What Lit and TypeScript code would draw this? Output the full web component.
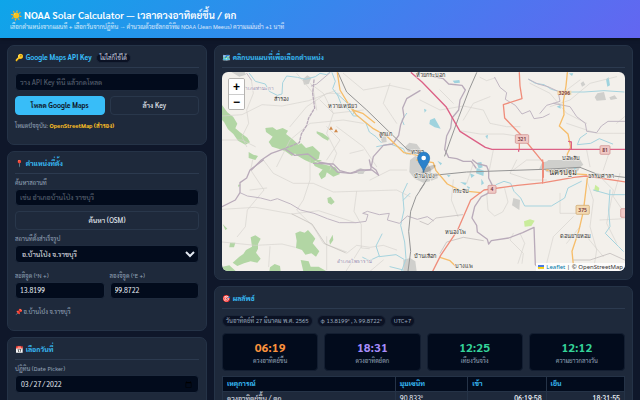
import { LitElement, html, svg, css } from "lit";
import { customElement, state } from "lit/decorators.js";

const stats = [
  { time: "06:19", label: "ดวงอาทิตย์ขึ้น", tone: "rise" },
  { time: "18:31", label: "ดวงอาทิตย์ตก", tone: "set" },
  { time: "12:25", label: "เที่ยงวันจริง", tone: "noon" },
  { time: "12:12", label: "ความยาวกลางวัน", tone: "noon" },
];

const rows = [
  { event: "ดวงอาทิตย์ขึ้น / ตก", zenith: "90.833°", am: "06:19:58", pm: "18:31:55" },
];

@customElement("solar-map")
export class SolarMap extends LitElement {
  static styles = css`
    :host {
      display: block;
      position: relative;
      height: 199px;
      border-radius: 6px;
      overflow: hidden;
      background: #f3f0eb;
      font-family: "Noto Sans", "Liberation Sans", sans-serif;
    }
    .canvas { display: block; width: 100%; height: 100%; }
    .canvas path { fill: none; stroke-linejoin: round; stroke-linecap: round; }
    .canvas .wood path { fill: #b2d6a4; }
    .canvas .town path { fill: #cfcfcc; }
    .canvas .lime path { fill: #c9ec9b; }
    .canvas .pond path { fill: #9fd3de; }
    .minor path { stroke: #d6d3cf; stroke-width: 2; }
    .river path { stroke: #a5d3de; stroke-width: 3; }
    .bound path { stroke: #b9abba; stroke-width: 4; }
    .thin path { stroke: #c0b6c2; stroke-width: 3; }
    .rail path { stroke: #959595; stroke-width: 3; }
    .amber path { stroke: #f6bd6a; stroke-width: 4; }
    .trunk path { stroke: #ef8d7b; stroke-width: 4; }
    .motor path { stroke: #dc6186; stroke-width: 4; }
    text { font-size: 17px; text-anchor: middle; fill: #333; stroke: #f6f3ee; stroke-width: 3; paint-order: stroke; }
    text.city { font-size: 22px; }
    text.area { fill: #9186ad; font-size: 14px; }
    text.ref { font-size: 15px; fill: #70343c; stroke: none; font-weight: 600; }
    .zoom {
      position: absolute;
      top: 6px;
      left: 6px;
      display: flex;
      flex-direction: column;
      border: 1px solid #b5b3b0;
      border-radius: 2px;
      overflow: hidden;
    }
    .zoom button {
      width: 15px;
      height: 15px;
      padding: 0;
      border: 0;
      background: #fff;
      color: #000;
      font: bold 12px/14px "Liberation Sans", sans-serif;
    }
    .zoom button + button { border-top: 1px solid #ccc; }
    .credit {
      position: absolute;
      right: 0;
      bottom: 0;
      display: flex;
      align-items: center;
      gap: 2px;
      padding: 0 2px;
      background: rgba(255, 255, 255, 0.8);
      color: #333;
      font-size: 6px;
      line-height: 8px;
    }
    .credit a { color: #0078a8; text-decoration: none; }
    .flag { width: 6px; height: 4px; }
  `;

  render() {
    return html`
      <svg class="canvas" viewBox="666 216 1209 597" preserveAspectRatio="xMidYMid slice" role="img" aria-label="แผนที่">
        ${this.northWest()} ${this.northEast()} ${this.southWest()} ${this.southEast()} ${this.names()}
        ${this.pin()}
      </svg>
      <div class="zoom">
        <button aria-label="Zoom in">+</button>
        <button aria-label="Zoom out">−</button>
      </div>
      <div class="credit">
        <svg class="flag" viewBox="0 0 12 8" aria-hidden="true">
          <path fill="#4C7BE1" d="M0 0h12v4H0z" /><path fill="#FFD500" d="M0 4h12v3H0z" /><path fill="#E0BC00" d="M0 7h12v1H0z" />
        </svg>
        <span><a href="#">Leaflet</a> | © OpenStreetMap</span>
      </div>
    `;
  }

  private northWest() {
    return svg`<g transform="translate(630 120)">
      <g class="wood">
        <path d="M36 195l16 22 18 14 12 20-6 14 14 12 22 16 8 14-14 7-22-12-14-20-16-14-12-22-6-6z"/>
        <path d="M166 264l22-2 12 8 18-6 16 8-6 10 20 16 16 14-2 22-16 14-20-14-16-6-24-8-10-14 12-16-20-14z"/>
        <path d="M256 318l18-8 14 14 20-6 22 20-4 18-20 14-22-10-24-14-12-14z"/>
        <path d="M320 274l18 6 20 14-4 8-16-8-18-14zM116 336l14 8 14 4-8 12-20-6z"/>
        <path d="M306 362l30 10 40 10 14 20-20 8-30-20-26-12z"/>
      </g>
      <g class="town">
        <path d="M278 118l14-12 12 8-8 18-14 2zM584 322l14-14 22 4 12 16-10 14-28-6zM512 292l16-6 2 20-14 2zM64 96h40l4 8-20 6z"/>
        <path d="M600 360l16-12 34 16 14 26-4 34-20 4-26-12-16-20z"/>
      </g>
      <g class="minor">
        <path d="M124 120l6 40-20 50 6 40-20 40 14 30M36 228l60-4 60-30 60 4 80-16 80-30M300 130l40 30 30 60-20 60 30 60-20 50"/>
        <path d="M200 380l40-80 60-50 100-10 60 10M240 260l50-60 60-40 40 0M330 180l40 40 90-10M350 260l40 40-40 60M380 260l80 60 40 60M400 100l60 50 80-14 60 14M540 130l-20 60 40 60"/>
        <path d="M36 300l60 0 40 20M260 100l50 60M420 340l40 -10M310 150l10 60"/>
      </g>
      <g class="river">
        <path d="M118 100l18 24 30 8 12 22 24 12 14-4 2-34 12-20 32 4 24 6 30-8 14-10 20 4 10-8" stroke-width="4"/>
        <path d="M366 98l10 26-8 22 16 22 10 26 22 14 14 20 14 0 24 22 10 26 20 14 16 18" />
        <path d="M380 160l24 22 30 30-6 12M590 220l-14 20 6 14M500 320l40-8 40 14 8 16 40-2"/>
      </g>
      <g class="bound">
        <path d="M124 390l30-30 30-20 40-14 30 20 40-4 32 24 32 6 24 24 40 4 60-12 8-38 30-34 28-4 18-26 6-32 10-24-4-26 12-28 40-24" stroke-width="3"/>
        <path d="M312 120l-4 40 6 44-18 30-6 22 -16 26-6 26-40 16" class="thin" stroke-width="2" stroke-dasharray="8 5"/>
      </g>
      <g class="thin"><path d="M360 98l-40 34-16 6M124 120l-14-20" stroke-width="2"/></g>
      <g class="rail"><path d="M384 98l26 58 60 54 70 68 52 50 50 20" /></g>
      <g class="amber"><path d="M382 98l8 52 30 50 20 26 50 40 40 22 52 50 60 12"/><path d="M428 210l30 10 36 28"/></g>
      <g><path d="M357 269l6-10 6 10zM372 277l6-10 6 10z" style="fill:#d08849"/></g>
    </g>`;
  }

  private northEast() {
    return svg`<g transform="translate(1260 120)">
      <g class="town">
        <path d="M524 172l8-12 20-4 6 24-28 2zM568 172l16-6 8 10-20 4zM482 130l8-6 6 10-10 6zM356 390l10-22 20-6 60 4 30-14 14 22-20 16z"/>
      </g>
      <g class="pond">
        <path d="M30 240l14-6 8 14 10 18-18-4-16-10zM98 122l20-2 2 8-16 2zM558 118l8-6 4 24-8 4zM12 206l8 4-6 8zM410 200l12-6 0 12zM196 288l8-4-2 14zM170 368l14-2 4 16-12 4zM446 100l14 0-4 8z"/>
      </g>
      <g class="minor">
        <path d="M0 180l60 30 70-12 60 12 20 40 50 10 40 0M130 240l30-50 50-20M120 272l60 10 70 0 40 6M60 150l40 40M330 130l60 30 50 60 60 30M440 250l90 30 50 0 35 0M390 200l60-20 60-50 80-20M480 120l-40 30"/>
        <path d="M220 330l-12 60M500 330l10 50M570 330l-20 60M360 360l-40 0-40 30M180 112l20 10 24-8M590 250l24-20"/>
      </g>
      <g class="river"><path d="M326 118l20 12 26 4 22 14 22 6 36 2 40 0 60-4 60 4" stroke-width="2"/><path d="M500 280l-20 14-8 20 40-4 26-14 40 16" stroke-width="2"/></g>
      <g class="thin">
        <path d="M224 112l16 30 20 16-4 20 30 18 20 26 24-10 12 24 26-4 20-10" stroke-width="2"/>
        <path d="M326 118l28 14 30 8 30 14 6 30-40 12-20 24M400 190l50 10 20 30 26 20 4 24 30 4 14-20 20-14 60 0" stroke-width="2"/>
      </g>
      <g class="bound"><path d="M40 110l30 6 16 16 40 4 10 14-16 30-4 30-20 24-4 30-12 24-6 40 12 24 24 4 20 8 24 0 14 20"/></g>
      <g class="rail"><path d="M170 98l-22 50-32 84-42 116" stroke-width="2"/></g>
      <g class="amber"><path d="M442 98l-4 40-8 46 2 40-14 34 26 24 8 40-10 20 0 50"/></g>
      <g class="trunk"><path d="M298 98l2 40 6 38-56 18 4 40 46 48 70 86v44M298 328v-20"/></g>
      <g class="motor"><path d="M-26 98l32 28 72 74 42 74 76 48 20 6h400M296 328v6M454 328v-22l-8-2"/></g>
      <g fill="#f0c9c5" stroke="#c88" stroke-width="2"><rect x="286" y="284" width="40" height="26" rx="3"/><rect x="540" y="317" width="30" height="26" rx="3"/></g>
      <rect x="412" y="152" width="42" height="13" fill="#f3d9b1"/>
      <text class="ref" x="306" y="302">321</text><text class="ref" x="555" y="335">81</text><text class="ref" x="433" y="164">3296</text>
    </g>`;
  }

  private southWest() {
    return svg`<g transform="translate(630 480)">
      <g class="wood">
        <path d="M326 42l14-16 12 6-6 18-12 8zM352 114l10-4 12 16-10 8-10-6zM84 74l8 0-6 8zM358 242l10-18 2 16-10 14z"/>
        <path d="M256 220l14-6 14 4 10-8 14 16 8 10-8 14 20 24-10 16-14-10-18 4-10-14-18-6 2-22z"/>
        <path d="M122 232l14-6 16 10-8 16 0 14-6 12 14 18-10 12-20-4-20 6-20 8-14-10 20-18 12-8 8-12 18-10zM60 248l16 0-4 14-14 0zM272 300l24 4 6 16 24 0 24 14h-70zM180 322l14-10 16 6 2 16h-34zM38 320l20-4 20 18H38zM38 192l14 14-6 4zM302 0l24 6 10-6z"/>
      </g>
      <g class="town"><path d="M438 30l14-6 14 6-6 12-16 0zM580 300l20-6 16 10 4 30h-40z"/></g>
      <g class="minor">
        <path d="M36 148l100-6 110 20 80-10 110 36M128 0l-6 30 40 60-50 60-6 50-24 30M160 0l30 40 60 30 60 0 60 26 190-6 40 20M300 0l0 60-20 60-20 30 50 50 30 50 70 26M440 94l-8 60 22 40 0 70 24 2M410 280l30-24 40 6 40-6 40 14"/>
        <path d="M36 246l100 10 80 -4 40 10M180 260l-4 60M350 230v100M454 260l-50 80M520 300l-40 34M120 90l50-6M480 60l60-30 50 0"/>
      </g>
      <g class="minor"><path d="M246 162l60 30 40 60 60 26" style="stroke:#bdb8b4"/></g>
      <g class="river"><path d="M592 70l-14 30 4 50-10 46 12 50 4 50-14 40" stroke-width="4"/><path d="M516 222l-18 36 10 30-30 14-20-10M508 290l50-6 24 14M540 320l40 10M600 100l-20 20"/></g>
      <g class="bound"><path d="M36 140l40-20 14-22 0-30 20-14 10-24 40-30"/><path d="M310 10l60 2 20 20 30 8 30-10 36 0 20 16-8-16-16-12-4-18"/></g>
      <g class="thin"><path d="M90 98l22 10 40 6 30 8 20-6 40 16 30 18 40 10 40 16 36 12 50 0 30-4 6-20-16-4 14-6 36 10 30-4-6 20 36 10 24-22 30 10 30-8 18 12" stroke-width="2"/></g>
      <g class="rail"><path d="M630 90l22-34M644 70l-26 40-16 44-6 60 6 60-8 60"/></g>
    </g>`;
  }

  private southEast() {
    return svg`<g transform="translate(1260 480)">
      <g class="town"><path d="M384 0h80l20 14-10 20-60 8-34-6-10-10zM280 114l20 6-2 30-22-14zM20 40l30 0 4 14-20 8z"/></g>
      <g class="lime"><path d="M312 184l18-6 14 4-10 16-20 2zM526 74l12 10-2 12-14-4z"/></g>
      <g class="pond"><path d="M170 24l22 8-2 16-22-8zM150 40l14 6-10 8zM120 66l20 2-4 8zM140 78l10 4-4 8zM184 56l8 14-8 6zM80 44l12 2-6 6zM460 20l10 4-6 6zM52 2l14 8-4 6z"/></g>
      <g class="minor">
        <path d="M200 100l4 50 20 18 24-12 16-30-10-40M290 0l-20 40 60 20 50 0M280 220l-10 20 40 40-4 30M100 60l-6 60 20 50M300 220l14 30-20 60M160 10l-20 60M420 100v60h60M500 60l20 60-10 80 20 70-10 64M550 60l30 30-20 100 30 60M600 40l-20 70 34 50M460 170l-60 60-20 80M480 200l-40 50M500 230l50 60M540 180l74-4"/>
        <path d="M0 184l24 10 24-20 80-10M60 280l20-34 50-14 60 10M460 300l50 0 60-20 44 20" style="stroke:#b9b3b3"/>
      </g>
      <g class="river"><path d="M228 74l24-10 20 6 10 24 20 20 12 24 80 0 40-24 10-30 40-20M520 90l50 14 44 0M570 90l-4 60 4 50-14 20 40 40 14 14" stroke-width="2"/></g>
      <g class="bound"><path d="M158 0l12 10 30 8 6 16 0 20 10 20-12 26-20 10-20 30-8 34 14 22 2 20 30 22 4 14 8-10 52-8 42-16 34-16 4 112 12 14" stroke-width="5"/></g>
      <g class="rail"><path d="M0 50l140-14 230-8 110-6 50 20 84 10" stroke-width="2"/></g>
      <g class="amber"><path d="M-10 0l50 8 8 24 34 40 40 20 60 6M502 54l-12 100-14 60-20 60 6 60M380 30l60 10 60 4M60 292l30 10 20 20"/></g>
      <g class="trunk"><path d="M38 334l24-48 50-74 40-92 40-30 100-14 80-8 90-16 36-4 120 18M368 0v70"/></g>
      <g fill="#f0c9c5" stroke="#c88" stroke-width="2"><rect x="204" y="76" width="24" height="24" rx="3"/><rect x="602" y="146" width="30" height="26" rx="3"/></g>
      <rect x="468" y="136" width="40" height="27" rx="3" fill="#f3d9b1" stroke="#caa46a" stroke-width="2"/>
      <text class="ref" x="216" y="94">4</text><text class="ref" x="488" y="155">375</text>
    </g>`;
  }

  private names() {
    return svg`
      <text x="843" y="302">สำรอง</text><text class="area" x="775" y="270">อำเภอท่ามะกา</text>
      <text x="1027" y="325">หวายเหนียว</text><text x="1156" y="408">ลูกแก</text><text x="1290" y="232">ห้วยกระบอก</text>
      <text x="1252" y="462">ท่าผา</text><text x="1272" y="535">บ้านโป่ง</text><text x="1714" y="481">บ่อพลับ</text>
      <text class="city" x="1690" y="526">นครปฐม</text><text x="1802" y="535">ธรรมศาลา</text><text x="1383" y="579">กระจับ</text>
      <text x="1366" y="702">หนองโพ</text><text x="1725" y="713">ดอนยายหอม</text><text x="1276" y="774">บ้านเลือก</text>
      <text x="1393" y="803">บางแพ</text><text class="area" x="1063" y="790">อำเภอโพธาราม</text>`;
  }

  private pin() {
    return svg`<g transform="translate(1252 456)">
      <ellipse cx="34" cy="51" rx="24" ry="7" fill="#000" opacity=".18" transform="rotate(-28 34 51)"/>
      <path d="M19 60C16 44 1 34 1 18a18 18 0 0 1 36 0c0 16-15 26-18 42z" style="fill:#2a81cb;stroke:#226fab;stroke-width:2"/>
      <circle cx="19" cy="18" r="7" fill="#fff"/>
    </g>`;
  }
}

@customElement("app-root")
export class AppRoot extends LitElement {
  @state() private lat = "13.8199";
  @state() private lng = "99.8722";

  static styles = css`
    :host {
      display: block;
      height: 100vh;
      overflow: hidden;
      background: #0f172a;
      color: #e2e8f0;
      font-family: Sarabun, "Noto Sans", "Liberation Sans", sans-serif;
      font-size: 7px;
      line-height: 10px;
    }
    * { box-sizing: border-box; }
    header {
      padding: 9px 10px 6px;
      background: linear-gradient(135deg, #0ea5e9, #6366f1);
      color: #fff;
      box-shadow: 0 1px 4px rgba(0, 0, 0, 0.4);
    }
    h1 { display: flex; gap: 2px; margin: 0; font-size: 10px; line-height: 12px; font-weight: 600; }
    header p { margin: 0; font-size: 6px; line-height: 11px; opacity: 0.8; }
    main {
      display: grid;
      grid-template-columns: 200px minmax(0, 1fr);
      gap: 7px;
      padding: 7px;
      align-items: start;
    }
    .column { display: flex; flex-direction: column; gap: 6px; min-width: 0; }
    .card {
      padding: 7px 7px 13px;
      background: #1e293b;
      border: 1px solid #253347;
      border-radius: 7px;
    }
    .card.wide { padding-bottom: 8px; }
    h2 {
      display: flex;
      align-items: center;
      gap: 3px;
      margin: 0 0 4px;
      padding-bottom: 4px;
      border-bottom: 1px solid #2c3a4f;
      color: #38bdf8;
      font-size: 7px;
      line-height: 10px;
      font-weight: 700;
    }
    .pill {
      padding: 0 3px;
      border-radius: 6px;
      background: #0b1224;
      border: 1px solid #1a2538;
      color: #94a3b8;
      font-size: 6px;
      line-height: 10px;
      font-weight: 400;
    }
    h2 .pill { margin-left: 1px; line-height: 8px; color: #cbd5e1; }
    input, select, .btn {
      display: block;
      width: 100%;
      height: 18px;
      padding: 0 4px;
      border: 1px solid #1f2b3e;
      border-radius: 4px;
      background: #020b1c;
      color: #e2e8f0;
      font-family: inherit;
      font-size: 7px;
    }
    select { padding: 0 2px; }
    input.compact { height: 17px; }
    h2 + input { margin-top: 5px; }
    input::placeholder { color: #5d6675; }
    input::-webkit-calendar-picker-indicator { width: 7px; height: 7px; }
    label { display: block; margin: 4px 0 1px; color: #94a3b8; font-size: 6px; line-height: 10px; }
    .pair label { margin-top: 8px; }
    .btn { height: 19px; margin-top: 5px; background: #1e293b; border-color: #29374b; font-weight: 500; text-align: center; }
    .btn.primary { background: #38bdf8; border-color: #38bdf8; color: #0f172a; font-weight: 700; }
    .pair { display: grid; grid-template-columns: 1fr 1fr; gap: 5px; }
    .hint { margin: 6px 0 0; color: #94a3b8; font-size: 6px; line-height: 10px; }
    .pair + .hint.place { margin-top: 8px; }
    .hint strong { color: #fbbf24; }
    .pills { display: flex; gap: 4px; margin-top: 6px; }
    .stats { display: grid; grid-template-columns: repeat(4, 1fr); gap: 6px; margin-top: 6px; }
    .stat {
      padding: 6px 4px 3px;
      border: 1px solid #131e31;
      border-radius: 4px;
      background: #020b1c;
      text-align: center;
    }
    .stat b { display: block; font-size: 12px; line-height: 15px; }
    .stat span { display: block; color: #94a3b8; font-size: 6px; line-height: 12px; }
    .rise { color: #fb923c; }
    .set { color: #a78bfa; }
    .noon { color: #34d399; }
    table { width: 100%; margin-top: 5px; border-collapse: collapse; table-layout: fixed; }
    th, td { height: 15px; padding: 0 4px; border: 1px solid #253347; text-align: left; }
    th { background: #020b1c; color: #38bdf8; font-weight: 700; }
    .event { width: 43%; }
    .zenith { width: 18%; }
    .clock { text-align: right; font-weight: 600; }
  `;

  render() {
    return html`
      <header>
        <h1><span>☀️</span><span>NOAA Solar Calculator — เวลาดวงอาทิตย์ขึ้น / ตก</span></h1>
        <p>เลือกตำแหน่งจากแผนที่ + เลือกวันจากปฏิทิน → คำนวณด้วยอัลกอริทึม NOAA (Jean Meeus) ความแม่นยำ ±1 นาที</p>
      </header>
      <main>
        <div class="column">
          <section class="card">
            <h2>🔑 Google Maps API Key <span class="pill">ไม่ใส่ก็ใช้ได้</span></h2>
            <input type="text" aria-label="API Key" placeholder="วาง API Key ที่นี่ แล้วกดโหลด" />
            <div class="pair">
              <button class="btn primary">โหลด Google Maps</button>
              <button class="btn">ล้าง Key</button>
            </div>
            <p class="hint">โหมดปัจจุบัน: <strong>OpenStreetMap (สำรอง)</strong></p>
          </section>
          <section class="card">
            <h2>📍 ตำแหน่งที่ตั้ง</h2>
            <label for="place">ค้นหาสถานที่</label>
            <input id="place" class="compact" type="text" placeholder="เช่น อำเภอบ้านโป่ง ราชบุรี" />
            <button class="btn">ค้นหา (OSM)</button>
            <label for="preset">สถานที่ตั้งสำเร็จรูป</label>
            <select id="preset"><option>อ.บ้านโป่ง จ.ราชบุรี</option></select>
            <div class="pair">
              <div><label for="lat">ละติจูด (°N +)</label><input id="lat" class="compact" type="text" .value=${this.lat} /></div>
              <div><label for="lng">ลองจิจูด (°E +)</label><input id="lng" class="compact" type="text" .value=${this.lng} /></div>
            </div>
            <p class="hint place">📌 อ.บ้านโป่ง จ.ราชบุรี</p>
          </section>
          <section class="card">
            <h2>📅 เลือกวันที่</h2>
            <label for="date">ปฏิทิน (Date Picker)</label>
            <input id="date" type="date" value="2022-03-27" />
          </section>
        </div>
        <div class="column">
          <section class="card wide">
            <h2>🗺️ คลิกบนแผนที่เพื่อเลือกตำแหน่ง</h2>
            <solar-map></solar-map>
          </section>
          <section class="card wide">
            <h2>🎯 ผลลัพธ์</h2>
            <div class="pills">
              <span class="pill">วันอาทิตย์ที่ 27 มีนาคม พ.ศ. 2565</span>
              <span class="pill">φ ${this.lat}° , λ ${this.lng}°</span>
              <span class="pill">UTC+7</span>
            </div>
            <div class="stats">
              ${stats.map((s) => html`<div class="stat"><b class=${s.tone}>${s.time}</b><span>${s.label}</span></div>`)}
            </div>
            <table>
              <thead>
                <tr><th class="event">เหตุการณ์</th><th class="zenith">มุมเซนิท</th><th>เช้า</th><th>เย็น</th></tr>
              </thead>
              <tbody>
                ${rows.map((r) => html`<tr><td>${r.event}</td><td>${r.zenith}</td><td class="clock">${r.am}</td><td class="clock">${r.pm}</td></tr>`)}
              </tbody>
            </table>
          </section>
        </div>
      </main>
    `;
  }
}
